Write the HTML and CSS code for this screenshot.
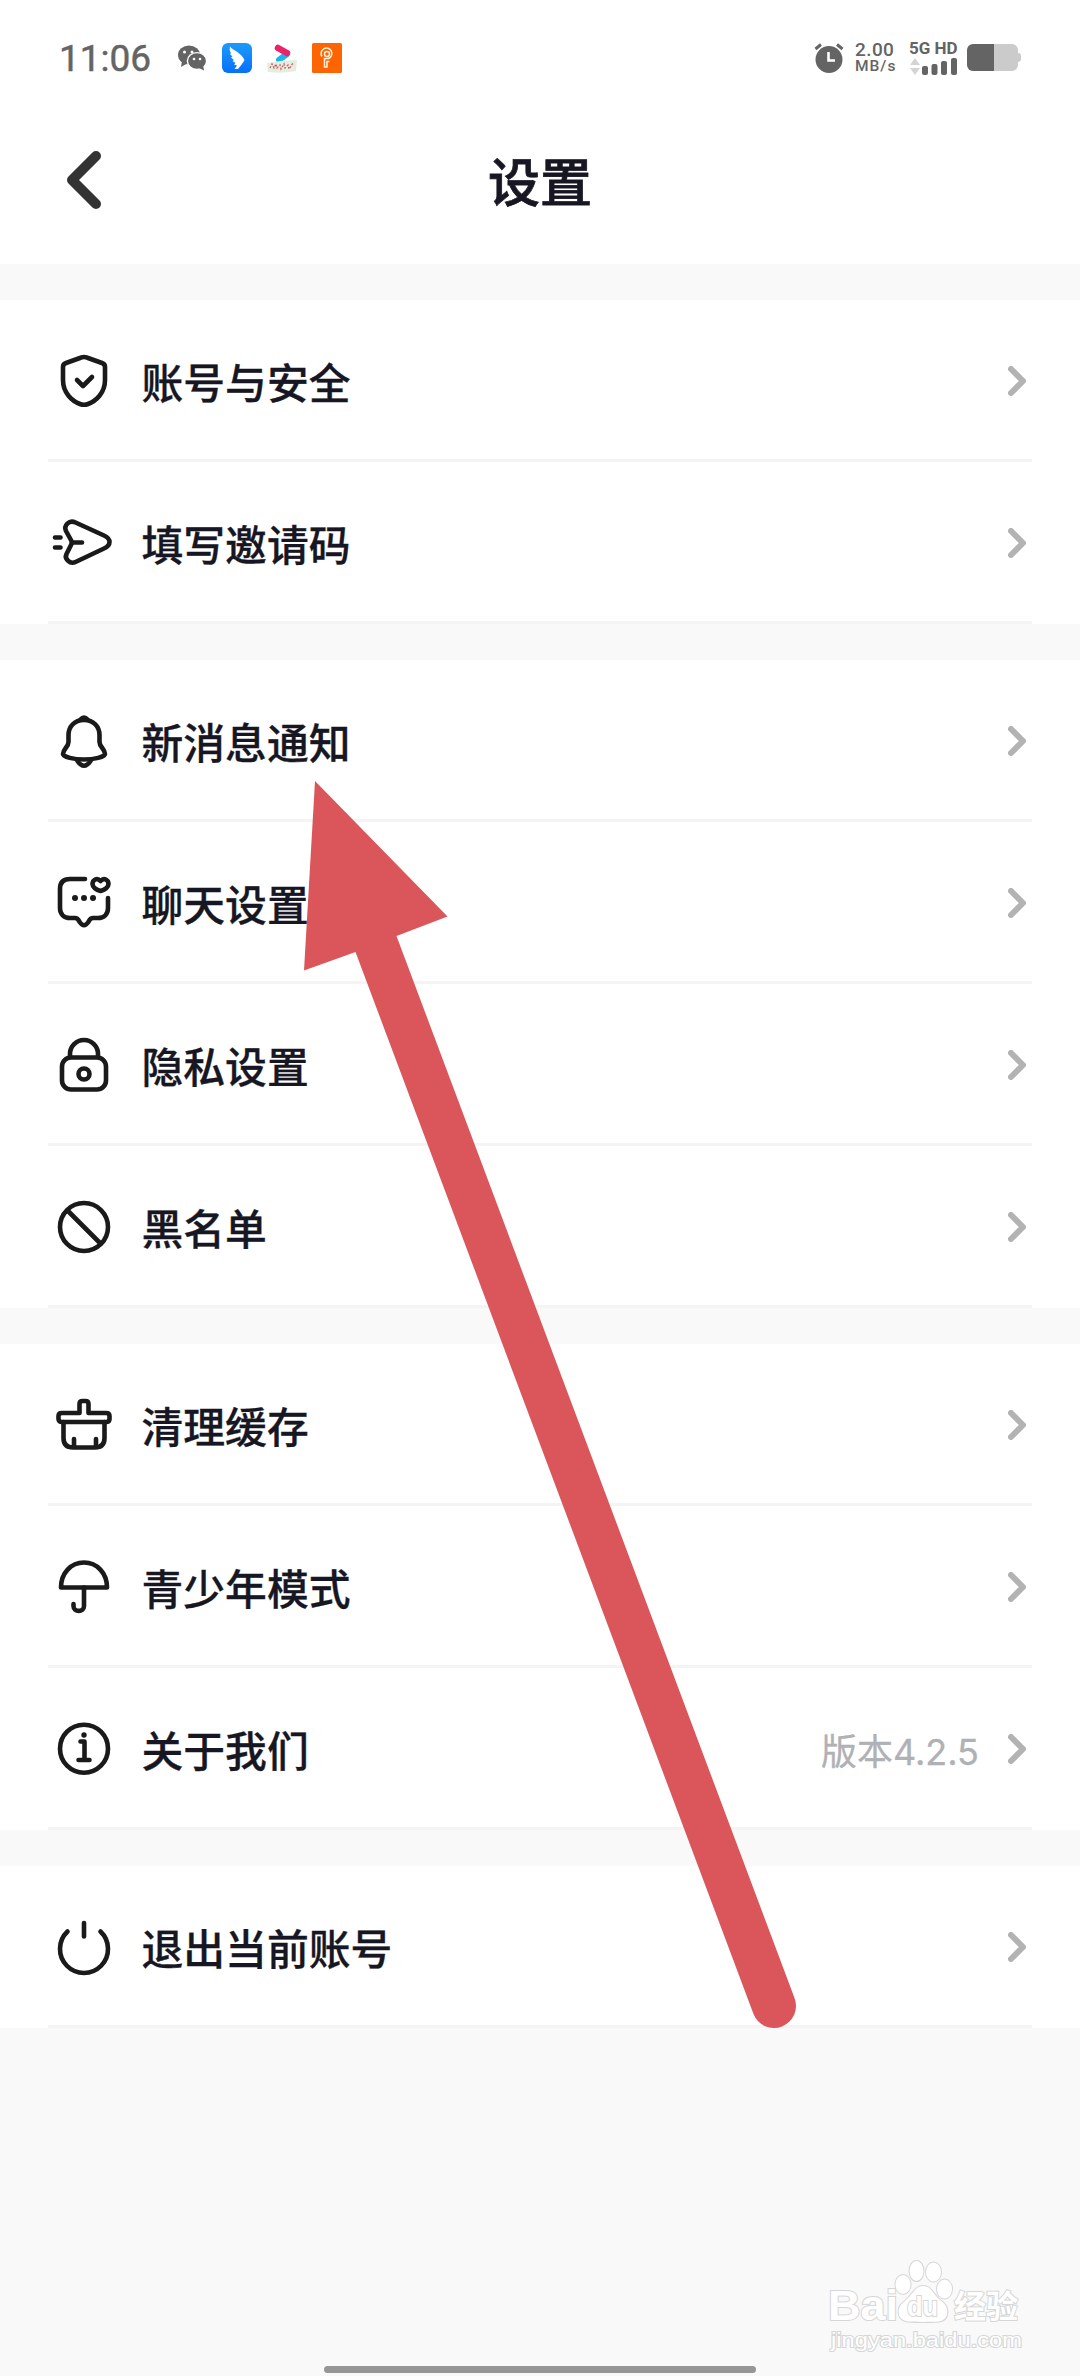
FILE: index.html
```
<!DOCTYPE html>
<html lang="zh-CN">
<head>
	<meta charset="utf-8">
	<title>设置</title>
	<link rel="stylesheet" href="styles.css">
</head>
<body>
	<!-- shared arrow at the end of every row -->
	<svg width="0" height="0" class="defs">
		<symbol id="chevron" viewBox="0 0 18 30">
			<path d="M3 3 L15 15 L3 27"/>
		</symbol>
	</svg>

	<div id="status">
		<div id="clock">11:06</div>
		<div id="apps">
			<svg width="30" height="30" viewBox="0 0 30 30">
				<ellipse cx="12" cy="12" rx="11" ry="9.4" fill="#646464"/>
				<path d="M5 18 L4 24 L11 20Z" fill="#646464"/>
				<ellipse cx="20" cy="18" rx="9.6" ry="8.4" fill="#646464" stroke="#fff" stroke-width="1.4"/>
				<path d="M22 25 L27 27.5 L26 22Z" fill="#646464"/>
				<circle cx="7.5" cy="9" r="1.5" fill="#fff"/>
				<circle cx="15" cy="9" r="1.5" fill="#fff"/>
				<circle cx="17" cy="16" r="1.3" fill="#fff"/>
				<circle cx="23" cy="16" r="1.3" fill="#fff"/>
			</svg>
			<svg width="30" height="30" viewBox="0 0 30 30">
				<defs>
					<linearGradient id="blue" x1="0" y1="0" x2="0" y2="1">
						<stop offset="0" stop-color="#1c9bfb"/>
						<stop offset="1" stop-color="#0670fa"/>
					</linearGradient>
				</defs>
				<rect width="30" height="30" rx="6" fill="url(#blue)"/>
				<path d="M8 3.500 C10 7 19 9 22.500 17 C21 20 18.500 23 16 26 H12.500 L15 22.500 L12 21.500 L13.500 20 L10.500 18 L12 17 L9 14.500 L10.500 13.500 L8 11 L9 10 C7.500 8 7.500 6 8 3.500Z" fill="#fff"/>
			</svg>
			<svg width="30" height="30" viewBox="0 0 30 30">
				<path d="M12 17 L20 11" stroke="#1bb4ef" stroke-width="6" stroke-linecap="round"/>
				<path d="M11 5 L20 10" stroke="#ee2168" stroke-width="6.500" stroke-linecap="round"/>
				<path d="M0 20 Q15 17 30 17 L29 28 Q15 31 1 29Z" fill="#e2efdd"/>
				<path d="M3 25 l2 -4 l2 4 l2 -4 l1 4 l3 -3 l1 4 l3 -5 l1 4 l3 -3 l1 4 l4 -6" stroke="#d7566f" stroke-width="1.300" stroke-dasharray="2 1.500" fill="none"/>
			</svg>
			<svg width="30" height="30" viewBox="0 0 30 30">
				<rect width="30" height="30" rx="1.500" fill="#fc6404"/>
				<g fill="none" stroke="#fff3dc" stroke-width="1.500">
					<path d="M10 13.500 A5.400 5.400 0 1 1 16.500 15.500 L12.500 15.500 L12.500 24 L15 24 L15 18.500 L17.500 18.500"/>
					<circle cx="15" cy="11" r="2.500"/>
				</g>
			</svg>
		</div>
		<div id="signals">
			<svg width="30" height="30" viewBox="0 0 30 30">
				<circle cx="15" cy="16.500" r="13.500" fill="#646464"/>
				<path d="M1.500 6 L7 1.500 M28.500 6 L23 1.500" stroke="#646464" stroke-width="3"/>
				<path d="M14.500 9 V17.500 H21" fill="none" stroke="#fff" stroke-width="2.600"/>
			</svg>
			<div id="speed">
				<div class="rate">2.00</div>
				<div class="unit">MB/s</div>
			</div>
			<div id="network">
				<div class="type">5G HD</div>
				<svg width="50" height="18" viewBox="0 0 50 18">
					<path d="M1 8 L6 1 L11 8Z M1 11 L6 18 L11 11Z" fill="#d4d4d4"/>
					<g fill="#646464">
						<rect x="13" y="9" width="6" height="9" rx="2"/>
						<rect x="22.500" y="7" width="6" height="11" rx="2"/>
						<rect x="32" y="4" width="6" height="14" rx="2"/>
						<rect x="42" y="1" width="6" height="17" rx="2"/>
					</g>
				</svg>
			</div>
			<svg width="54" height="28" viewBox="0 0 54 28">
				<path d="M27 0 H45 A6 6 0 0 1 51 6 V9 A3 3 0 0 1 54 12 V15 A3 3 0 0 1 51 18 V21 A6 6 0 0 1 45 27 H27Z" fill="#cbcbcb"/>
				<path d="M27 0 H6 A6 6 0 0 0 0 6 V21 A6 6 0 0 0 6 27 H27Z" fill="#646464"/>
			</svg>
		</div>
	</div>

	<div id="header">
		<svg class="back" width="34" height="58" viewBox="0 0 34 58">
			<path d="M29 5 L5 29 L29 53"/>
		</svg>
		<h1>设置</h1>
	</div>

	<div class="group">
		<div class="row">
			<svg class="icon" viewBox="0 0 60 60">
				<path d="M30 7 Q33 7 34 8 L48 13 Q51 14 51 17 V30 C51 43 42 51 34 54 Q30 55.500 26 54 C18 51 9 43 9 30 V17 Q9 14 12 13 L26 8 Q27 7 30 7Z"/>
				<path d="M23 30 L29 36 L38 27"/>
			</svg>
			<span class="label">账号与安全</span>
			<svg class="go"><use href="#chevron"/></svg>
		</div>
		<div class="row">
			<svg class="icon" viewBox="0 0 60 60">
				<path d="M21.500 10.500 L50 23.500 Q55.500 26 55.500 30 Q55.500 34 50 36.500 L21.500 50 C16 52.500 10 47 12.500 42 L17.500 32 Q18 30.500 17.500 29 L12 19 C9.500 13.500 15 7.500 21.500 10.500Z"/>
				<path d="M18 30.500 H28"/>
				<path d="M1 25.500 H6.500 M1 35.500 H6.500"/>
			</svg>
			<span class="label">填写邀请码</span>
			<svg class="go"><use href="#chevron"/></svg>
		</div>
	</div>

	<div class="group">
		<div class="row">
			<svg class="icon" viewBox="0 0 60 60">
				<path d="M30 10 C20 10 14.500 17 14.500 25 V32 C14.500 37 9 39 9 44 C9 47 20 49.500 30 49.500 C40 49.500 51 47 51 44 C51 39 45.500 37 45.500 32 V25 C45.500 17 40 10 30 10Z"/>
				<path d="M26.500 9.500 Q30 5.500 33.500 9.500Z"/>
				<path d="M23.500 51 Q30 60.500 36.500 51"/>
			</svg>
			<span class="label">新消息通知</span>
			<svg class="go"><use href="#chevron"/></svg>
		</div>
		<div class="row">
			<svg class="icon" viewBox="0 0 60 60">
				<path d="M31 7 H16 C9 7 6 11 6 17 V36 C6 42 10 46 16 46 H21 C24 46 24.500 48 26 50.500 Q30 56 34 50.500 C35.500 48 36 46 39 46 H44 C50 46 54 42 54 36 V26"/>
				<path d="M46.500 9 C43 5 38.500 8 38.500 12 C38.500 15 42 18 46.500 19 C51 18 54.500 15 54.500 12 C54.500 8 50 5 46.500 9Z"/>
				<g class="solid">
					<circle cx="21" cy="26" r="3"/>
					<circle cx="30" cy="26" r="3"/>
					<circle cx="39" cy="26" r="3"/>
				</g>
			</svg>
			<span class="label">聊天设置</span>
			<svg class="go"><use href="#chevron"/></svg>
		</div>
		<div class="row">
			<svg class="icon" viewBox="0 0 60 60">
				<rect x="8" y="23.500" width="44" height="32" rx="9"/>
				<path d="M16 23 V20 A14 14 0 0 1 44 20 V23"/>
				<circle cx="30" cy="40" r="5.500"/>
			</svg>
			<span class="label">隐私设置</span>
			<svg class="go"><use href="#chevron"/></svg>
		</div>
		<div class="row">
			<svg class="icon" viewBox="0 0 60 60">
				<circle cx="30" cy="31" r="24"/>
				<path d="M13.500 14.500 L46.500 47.500"/>
			</svg>
			<span class="label">黑名单</span>
			<svg class="go"><use href="#chevron"/></svg>
		</div>
	</div>

	<div class="group">
		<div class="row">
			<svg class="icon" viewBox="0 0 60 60">
				<path d="M25.500 19 V10 Q25.500 7 28.500 7 H31.500 Q34.500 7 34.500 10 V19 H52 Q55.500 19 55.500 22 V25 Q55.500 28 52 28 H8 Q4.500 28 4.500 25 V22 Q4.500 19 8 19 H25.500"/>
				<path d="M9.500 28 V44 Q9.500 53.500 19 53.500 H41 Q50.500 53.500 50.500 44 V28"/>
				<path d="M20 45 V52 M42 45 V52"/>
			</svg>
			<span class="label">清理缓存</span>
			<svg class="go"><use href="#chevron"/></svg>
		</div>
		<div class="row">
			<svg class="icon" viewBox="0 0 60 60">
				<path d="M7 31.500 C7 17 17 6.500 30 6.500 C43 6.500 53 17 53 31.500Z"/>
				<path d="M30 31.500 V50 C30 56.500 19.500 56.500 19.500 50 V48"/>
			</svg>
			<span class="label">青少年模式</span>
			<svg class="go"><use href="#chevron"/></svg>
		</div>
		<div class="row">
			<svg class="icon" viewBox="0 0 60 60">
				<circle cx="30" cy="30.700" r="24"/>
				<path d="M26.500 23.500 H30.500 V42 M24.500 42 H35.500"/>
				<circle class="solid" cx="30" cy="17" r="2.700"/>
			</svg>
			<span class="label">关于我们</span>
			<span class="version">版本4.2.5</span>
			<svg class="go"><use href="#chevron"/></svg>
		</div>
	</div>

	<div class="group">
		<div class="row">
			<svg class="icon" viewBox="0 0 60 60">
				<path d="M13.500 15.500 A24 24 0 1 0 46.500 15.500"/>
				<path d="M30 7 V20.500"/>
			</svg>
			<span class="label">退出当前账号</span>
			<svg class="go"><use href="#chevron"/></svg>
		</div>
	</div>

	<!-- red arrow drawn over the list -->
	<svg id="pointer" width="1080" height="2376" viewBox="0 0 1080 2376">
		<path d="M315 781 L447.500 916.500 L396.500 936 L794.500 1998 A22 22 0 0 1 753.500 2014 L355.500 952 L304 970.500Z"/>
	</svg>

	<svg id="watermark" width="210" height="110" viewBox="0 0 210 110">
		<g class="outline">
			<text x="5" y="60" class="logo" textLength="70" lengthAdjust="spacingAndGlyphs">Bai</text>
			<ellipse cx="80" cy="24.500" rx="7.500" ry="9.500"/>
			<ellipse cx="93.500" cy="11" rx="7" ry="10"/>
			<ellipse cx="110.500" cy="12" rx="7.500" ry="9.500"/>
			<ellipse cx="121.500" cy="29" rx="7.500" ry="9.500"/>
			<path d="M100 26 C108 26 110 34 117 40 C128 47 126 60 116 61.500 C108 62 92 62 85 61.500 C74 60 72 48 82 41 C90 34 92 26 100 26Z"/>
			<text x="84" y="56" class="du" textLength="31" lengthAdjust="spacingAndGlyphs">du</text>
			<text x="131" y="58" class="cn">经验</text>
		</g>
		<text x="8" y="87" class="outline url" textLength="191" lengthAdjust="spacingAndGlyphs">jingyan.baidu.com</text>
	</svg>

	<div id="home_bar"></div>
</body>
</html>
```

FILE: styles.css
```
* {
	box-sizing: border-box;
}
body {
	margin: 0;
	width: 1080px;
	height: 2376px;

	position: relative;
	overflow: hidden;

	background-color: #f9f9f9;
	color: #171723;
	font-family: "Noto Sans CJK SC", sans-serif;
}
.defs {
	position: absolute;
}

#status {
	height: 116px;
	padding: 0 60px 0 59px;

	display: flex;
	align-items: center;

	background-color: #fff;
	color: #646464;
	font-family: Roboto, "Noto Sans", sans-serif;
}
#clock {
	width: 118px;
	font-size: 37px;
	-webkit-text-stroke: 0.5px #646464;
}
#apps {
	display: flex;
	gap: 15px;
}
#signals {
	margin-left: auto;
	margin-right: -1px;

	display: flex;
	align-items: center;
}
#speed {
	width: 54px;
	margin-left: 11px;
}
.rate {
	font-size: 19px;
	line-height: 16px;
	font-weight: 500;
	letter-spacing: 0.4px;
}
.unit {
	font-size: 15.5px;
	line-height: 16px;
	font-weight: 500;
	letter-spacing: 1px;
}
#network {
	width: 58px;
	height: 34px;

	display: flex;
	flex-direction: column;
	justify-content: space-between;
}
.type {
	font-size: 17px;
	line-height: 15px;
	font-weight: bold;
}

#header {
	height: 148px;
	padding: 0 67px 20px;

	display: grid;
	grid-template-columns: 34px 1fr 34px;
	align-items: center;

	background-color: #fff;
}
#header h1 {
	margin: 0;

	font-size: 52px;
	line-height: 60px;
	font-weight: 500;
	text-align: center;
	-webkit-text-stroke: 0.8px #171723;
}
.back {
	fill: none;
	stroke: #333;
	stroke-width: 10;
	stroke-linecap: round;
	stroke-linejoin: round;
}

.group {
	margin-top: 36px;
	background-color: #fff;
}
.row {
	height: 162px;
	margin: 0 48px;
	padding: 0 6px;

	display: flex;
	align-items: center;

	box-shadow: inset 0 -3px #f4f4f4;
}
.icon {
	width: 60px;
	height: 60px;
	margin-right: 27.5px;
	margin-bottom: 2px;

	overflow: visible;
	fill: none;
	stroke: #1a1a1a;
	stroke-width: 4.6;
	stroke-linecap: round;
	stroke-linejoin: round;
}
.solid {
	fill: #1a1a1a;
	stroke: none;
}
.label {
	flex: 1;

	font-size: 41.8px;
	line-height: 60px;
	font-weight: 500;
	-webkit-text-stroke: 0.3px #171723;
}
.version {
	margin-right: 29px;

	font-family: Inter, "Noto Sans CJK SC", sans-serif;
	font-size: 36px;
	color: #b0b1b5;
	-webkit-text-stroke: 0.3px #b0b1b5;
}
.go {
	width: 18px;
	height: 30px;

	fill: none;
	stroke: #b3b3b3;
	stroke-width: 6;
	stroke-linecap: round;
	stroke-linejoin: round;
}

#pointer {
	position: absolute;
	left: 0;
	top: 0;

	fill: #da565a;
}

#watermark {
	position: absolute;
	left: 823px;
	top: 2260px;
}
.outline {
	fill: #fff;
	stroke: #d6d6d6;
	stroke-width: 2;
	paint-order: stroke;
}
.logo {
	font: bold 42px "Liberation Sans", sans-serif;
}
.du {
	font: bold 27px "Liberation Sans", sans-serif;
}
.cn {
	font: bold 32px "Noto Sans CJK SC", sans-serif;
}
.url {
	font: 20px "Liberation Sans", sans-serif;
}

#home_bar {
	width: 432px;
	height: 7px;

	position: absolute;
	left: 324px;
	bottom: 3px;

	border-radius: 4px;
	background-color: #969696;
}
```
